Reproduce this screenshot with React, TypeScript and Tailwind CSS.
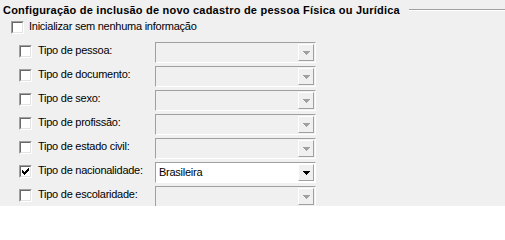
import React from "react";

const rows: { label: string; checked?: boolean; value?: string }[] = [
  { label: "Tipo de pessoa:" },
  { label: "Tipo de documento:" },
  { label: "Tipo de sexo:" },
  { label: "Tipo de profissão:" },
  { label: "Tipo de estado civil:" },
  { label: "Tipo de nacionalidade:", checked: true, value: "Brasileira" },
  { label: "Tipo de escolaridade:" },
];

function Check() {
  const px: [number, number][] = [
    [6, 0],
    [5, 1], [6, 1],
    [0, 2], [4, 2], [5, 2], [6, 2],
    [0, 3], [1, 3], [3, 3], [4, 3], [5, 3],
    [0, 4], [1, 4], [2, 4], [3, 4], [4, 4],
    [1, 5], [2, 5], [3, 5],
    [2, 6],
  ];
  return (
    <svg width="7" height="7" viewBox="0 0 7 7" shapeRendering="crispEdges">
      {px.map(([x, y], i) => (
        <rect key={i} x={x} y={y} width="1" height="1" fill="#000" />
      ))}
    </svg>
  );
}

function CheckBox({ checked, className = "" }: { checked?: boolean; className?: string }) {
  return (
    <div
      className={
        "w-[13px] h-[13px] shrink-0 border border-t-[#a0a0a0] border-l-[#a0a0a0] border-r-white border-b-white " +
        className
      }
    >
      <div className="w-full h-full border border-t-[#696969] border-l-[#696969] border-r-[#e3e3e3] border-b-[#e3e3e3] bg-white flex items-center justify-center">
        {checked && <Check />}
      </div>
    </div>
  );
}

function Arrow({ color }: { color: string }) {
  return (
    <svg width="7" height="4" viewBox="0 0 7 4" shapeRendering="crispEdges">
      <rect x="0" y="0" width="7" height="1" fill={color} />
      <rect x="1" y="1" width="5" height="1" fill={color} />
      <rect x="2" y="2" width="3" height="1" fill={color} />
      <rect x="3" y="3" width="1" height="1" fill={color} />
    </svg>
  );
}

function Combo({ value, enabled }: { value?: string; enabled?: boolean }) {
  return (
    <div
      className={
        "w-[161px] h-[21px] shrink-0 flex p-[1px] border border-t-[#a0a0a0] border-l-[#a0a0a0] border-r-white border-b-white " +
        (enabled ? "bg-white" : "bg-[#f0f0f0]")
      }
    >
      <div className="flex-1 pl-[2px] leading-[17px] whitespace-nowrap overflow-hidden">{value}</div>
      <div className="w-[16px] h-full flex items-center justify-center bg-[#f0f0f0] border border-t-white border-l-white border-r-[#a0a0a0] border-b-[#a0a0a0]">
        <Arrow color={enabled ? "#000000" : "#a0a0a0"} />
      </div>
    </div>
  );
}

export default function App() {
  return (
    <div className="w-[505px] h-[206px] overflow-hidden bg-[#f0f0f0] text-black text-[11px] tracking-[-0.25px] font-['Liberation_Sans',Arial,sans-serif]">
      <div className="flex items-center h-[14px] mt-[3px] pl-[3px]">
        <span className="font-bold leading-[14px] tracking-[0.22px] whitespace-nowrap">
          Configuração de inclusão de novo cadastro de pessoa Física ou Jurídica
        </span>
        <div className="flex-1 ml-[9px] border-t border-t-[#a0a0a0] border-b border-b-white" />
      </div>
      <div className="flex items-start mt-[4px] pl-[11px]">
        <CheckBox />
        <span className="ml-[5px] leading-[13px] -mt-[1px] whitespace-nowrap">
          Inicializar sem nenhuma informação
        </span>
      </div>
      <div className="flex flex-col gap-[3px] mt-[8px]">
        {rows.map((r) => (
          <div key={r.label} className="flex items-center h-[21px] pl-[19px]">
            <CheckBox checked={r.checked} className="mb-[2px]" />
            <span className="ml-[6px] w-[117px] leading-[13px] mb-[4px] whitespace-nowrap">{r.label}</span>
            <Combo value={r.value} enabled={r.checked} />
          </div>
        ))}
      </div>
    </div>
  );
}
